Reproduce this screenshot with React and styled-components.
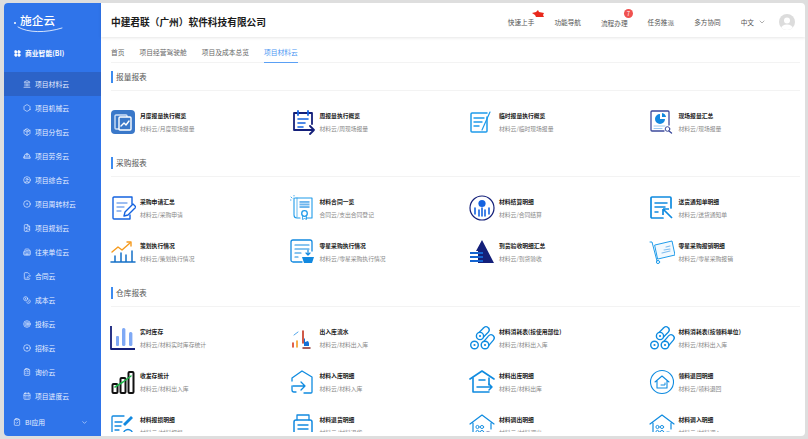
import React from 'react';
import styled, { createGlobalStyle } from 'styled-components';
import {
  LayoutGrid, Landmark, Hexagon, Package, HardHat, CircleUser, CircleDot, FileImage,
  Building2, FileSignature, Coins, Target, Disc, ClipboardList, CalendarDays, ClipboardCheck,
  ChevronDown,
} from 'lucide-react';

const GlobalStyle = createGlobalStyle`
  html, body { margin: 0; padding: 0; background: #dedede; }
  * { box-sizing: border-box; }
  body { font-family: "Noto Sans CJK SC", "Noto Sans", sans-serif; }
`;

const Page = styled.div`
  width: 808px;
  height: 439px;
  padding: 3px 3px 3px 4px;
  background: #dedede;
  overflow: hidden;
`;

const Window = styled.div`
  display: flex;
  height: 100%;
  background: #fff;
  border-radius: 4px;
  overflow: hidden;
`;

const Sidebar = styled.aside`
  width: 97px;
  flex: none;
  display: flex;
  flex-direction: column;
  background: #2f74ea;
  color: #e6efff;
`;

const Logo = styled.div`
  position: relative;
  height: 34px;
  padding: 9px 0 0 16px;
  color: #fff;
  font-size: 11.7px;
  line-height: 16px;
  font-weight: 500;
  svg { position: absolute; left: 13px; top: 23px; }
`;

const LogoDot = styled.span`
  position: absolute;
  left: 10px;
  top: 19px;
  width: 2px;
  height: 2px;
  border-radius: 50%;
  background: #fff;
`;

const BrandRow = styled.div`
  height: 32px;
  margin-bottom: 3px;
  padding-left: 10px;
  display: flex;
  align-items: center;
  gap: 4px;
  font-size: 6.8px;
  font-weight: 700;
  color: #fff;
`;

const NavItem = styled.div`
  height: 24px;
  padding-left: 19px;
  display: flex;
  align-items: center;
  gap: 4px;
  font-size: 6.8px;
  background: ${(p) => (p.$active ? '#2c63c8' : 'transparent')};
`;

const BiRow = styled.div`
  flex: 1;
  padding: 0 13px 0 9px;
  display: flex;
  align-items: center;
  gap: 4px;
  font-size: 6.8px;
  span { flex: 1; }
`;

const Main = styled.main`
  flex: 1;
  min-width: 0;
  padding-bottom: 4px;
  display: flex;
  flex-direction: column;
`;

const TopBar = styled.header`
  height: 34px;
  flex: none;
  padding: 3px 10px 0;
  display: flex;
  align-items: center;
  box-shadow: 0 1px 3px rgba(0, 0, 0, 0.1);
`;

const Company = styled.h1`
  flex: 1;
  margin: 0;
  font-size: 9.7px;
  font-weight: 700;
  color: #1b1b1b;
`;

const TopLink = styled.div`
  position: relative;
  margin: ${(p) => (p.$low ? '2px' : '0')} 0 0 20px;
  font-size: 6.65px;
  color: #555;
  white-space: nowrap;
`;

const NewMark = styled.svg`
  position: absolute;
  left: 24px;
  top: -7px;
`;

const Badge = styled.span`
  position: absolute;
  left: 23px;
  top: -9px;
  width: 9px;
  height: 9px;
  border-radius: 50%;
  background: #f0514f;
  color: #fff;
  font-size: 6px;
  line-height: 9px;
  text-align: center;
`;

const Lang = styled.div`
  margin-left: 20px;
  display: flex;
  align-items: center;
  gap: 4px;
  font-size: 6.65px;
  color: #555;
`;

const Avatar = styled.div`
  width: 16px;
  height: 16px;
  margin-left: 13px;
  border-radius: 50%;
  overflow: hidden;
  flex: none;
  svg { display: block; }
`;

const Tabs = styled.nav`
  height: 26px;
  flex: none;
  margin: 0 5px 0 10px;
  display: flex;
  gap: 15px;
  border-bottom: 1px solid #f3f3f3;
`;

const Tab = styled.div`
  height: 26px;
  padding-bottom: 5px;
  display: flex;
  align-items: flex-end;
  font-size: 6.75px;
  line-height: 10px;
  color: ${(p) => (p.$active ? '#4a96f2' : '#666')};
  border-bottom: 1px solid ${(p) => (p.$active ? '#5aa0f5' : 'transparent')};
`;

const Content = styled.div`
  flex: 1;
  min-height: 0;
  overflow: hidden;
  padding: 0 5px 0 10px;
`;

const SectionHead = styled.div`
  height: 28px;
  display: flex;
  align-items: center;
  border-bottom: 1px solid #f3f3f3;
  font-size: 7.7px;
  color: #555;
  &::before {
    content: '';
    width: 2px;
    height: 12px;
    margin-right: 3px;
    background: #3c8bf0;
  }
`;

const Section = styled.section`
  margin-bottom: 5px;
`;

const Grid = styled.div`
  padding-top: 9px;
  display: grid;
  grid-template-columns: repeat(4, 179.5px);
  grid-auto-rows: 44px;
`;

const Card = styled.div`
  display: flex;
  align-items: center;
`;

const IconBox = styled.div`
  width: 29px;
  flex: none;
  svg { display: block; margin-left: -1px; }
`;

const CardText = styled.div`
  display: flex;
  flex-direction: column;
  gap: 5px;
  white-space: nowrap;
`;

const CardTitle = styled.div`
  font-size: 5.8px;
  line-height: 8px;
  font-weight: 700;
  color: #222;
`;

const CardSub = styled.div`
  font-size: 5.8px;
  line-height: 8px;
  color: #888;
`;

const B = '#1f9bea';
const N = '#14207a';
const M = '#1463e0';
const C = '#0f8be0';

const Svg = ({ children }) => (
  <svg width="26" height="26" viewBox="0 0 26 26" fill="none" strokeWidth="1.4" strokeLinecap="round" strokeLinejoin="round">
    {children}
  </svg>
);

const icons = {
  monthly: (
    <Svg>
      <rect x="1" y="1" width="24" height="24" rx="4" fill="#3a78c9" />
      <rect x="5" y="6" width="12" height="14" rx="1" stroke="#cfe0f7" />
      <rect x="9" y="8" width="12" height="13" rx="1" stroke="#fff" fill="#3a78c9" />
      <path d="M11 17l3-3 2 2 3-4" stroke="#fff" />
    </Svg>
  ),
  weekly: (
    <Svg>
      <path d="M19 21H4V4h18v11" stroke={N} strokeWidth="1.8" />
      <path d="M8 2v4M18 2v4" stroke={M} strokeWidth="1.8" />
      <path d="M8 10h10M8 14h7M8 18h5" stroke={M} strokeWidth="1.6" />
      <path d="M14 21h10M20 17l4 4-4 4" stroke={N} strokeWidth="1.8" />
    </Svg>
  ),
  temp: (
    <Svg>
      <path d="M18 8V22a1 1 0 0 1-1 1H3a1 1 0 0 1-1-1V5a1 1 0 0 1 1-1h15" stroke={B} strokeWidth="1.5" />
      <path d="M5 9h10M5 13h8M5 17h5" stroke={B} />
      <path d="M21 3L13 21" stroke={B} strokeWidth="1.2" />
    </Svg>
  ),
  site: (
    <Svg>
      <path d="M20 16V3a1 1 0 0 0-1-1H3a1 1 0 0 0-1 1v18a1 1 0 0 0 1 1h12" stroke="#3c4a9c" strokeWidth="1.3" />
      <path d="M11 5a5 5 0 1 0 5 5h-5z" fill="#1289e0" />
      <path d="M13 4a5 5 0 0 1 4 4h-4z" fill="#1289e0" />
      <path d="M5 17h11M5 19.5h8" stroke="#9cc9ef" strokeWidth="1" />
      <circle cx="18.5" cy="20" r="2.3" stroke="#3c4a9c" strokeWidth="1" />
      <path d="M20 22l2.5 2" stroke="#3c4a9c" />
    </Svg>
  ),
  apply: (
    <Svg>
      <path d="M22 9V2H4a1 1 0 0 0-1 1v20a1 1 0 0 0 1 1h16v-4" stroke={M} strokeWidth="1.4" />
      <path d="M7 8h10M7 12h7M7 16h4" stroke="#7da9ee" strokeWidth="1.3" />
      <path d="M14 21l1-4 8-8 3 3-8 8z" stroke={M} strokeWidth="1.4" />
    </Svg>
  ),
  contract: (
    <Svg>
      <path d="M5 3h17v20h-6M10 23H7a3 3 0 0 1-3-3V3" stroke={B} strokeWidth="1.1" />
      <path d="M7 3v19" stroke={B} strokeWidth="0.7" />
      <rect x="9.5" y="6" width="10" height="7" fill="#6eb6ee" />
      <path d="M9.5 8.3h10M9.5 10.6h10" stroke="#fff" strokeWidth="0.6" />
      <circle cx="14.5" cy="18.5" r="2.8" stroke={B} strokeWidth="1.3" />
      <path d="M12.5 21.5v3l2-1 2 1v-3" stroke={B} strokeWidth="0.8" />
      <path d="M1 2l1 1M4 0v1M0 5h1" stroke={B} strokeWidth="0.8" />
    </Svg>
  ),
  settle: (
    <Svg>
      <circle cx="13" cy="13" r="12" stroke={N} strokeWidth="1.2" />
      <circle cx="13" cy="8.5" r="3.6" fill={M} />
      <path d="M6 13v6M10 15v6M13 13v8M16 15v6M20 13v6" stroke={M} strokeWidth="1.6" />
    </Svg>
  ),
  notice: (
    <Svg>
      <path d="M14 23H3a1 1 0 0 1-1-1V3a1 1 0 0 1 1-1h18a1 1 0 0 1 1 1v10" stroke={C} strokeWidth="1.7" />
      <path d="M6 8h12M6 12h10M6 17h3" stroke={C} strokeWidth="1.5" />
      <path d="M14 14h6M14 14v6M14 14l9 9" stroke={C} strokeWidth="1.7" strokeLinecap="butt" />
    </Svg>
  ),
  plan: (
    <Svg>
      <path d="M2 13l6-5 4 3 8-7" stroke="#f59a1e" strokeWidth="1.4" />
      <path d="M17 3h4v4" stroke="#f59a1e" strokeWidth="1.4" />
      <path d="M1 23h24M5 23v-6M11 23v-9M16 23v-7M22 23v-11" stroke="#1570c8" strokeWidth="1.5" />
    </Svg>
  ),
  retail: (
    <Svg>
      <path d="M12 23H3a2 2 0 0 1-2-2V3a2 2 0 0 1 2-2h17a2 2 0 0 1 2 2v9" stroke="#1289e0" strokeWidth="1.3" />
      <path d="M5 6h14M5 10h14M5 14h6M5 18h3" stroke="#1289e0" strokeWidth="1.2" />
      <path d="M12 18h12l-2 6h-8z" fill="#1289e0" />
      <path d="M18 11v5M16 14l2 2 2-2" stroke="#1289e0" strokeWidth="1.2" />
    </Svg>
  ),
  arrival: (
    <Svg>
      <path d="M13 1l12 23H9V12H7z" fill={N} />
      <path d="M1 14h13M1 18h13M1 22h13" stroke="#1463d0" strokeWidth="2" strokeLinecap="butt" />
    </Svg>
  ),
  cart: (
    <Svg>
      <path d="M1 3h2l5 19" stroke={B} strokeWidth="1" />
      <path d="M6 6l17-4 3 14-17 4z" stroke={B} strokeWidth="1" fill="#f2f9fe" />
      <path d="M13 14l8-2M15 11l6-1M17 8l4-1" stroke="#7fbdef" strokeWidth="1.1" />
      <circle cx="9" cy="23" r="1.6" stroke={B} strokeWidth="1" />
    </Svg>
  ),
  stock: (
    <Svg>
      <path d="M1 1v23h24" stroke={N} strokeWidth="1.8" strokeLinecap="butt" />
      <rect x="6" y="11" width="3" height="10" rx="1" fill="#7fa9f5" />
      <rect x="12" y="3" width="3.4" height="18" rx="1.5" fill="#7fa9f5" />
      <rect x="19" y="7" width="3.4" height="14" rx="1.5" fill="#7fa9f5" />
    </Svg>
  ),
  flow: (
    <Svg>
      <path d="M7 22v-6" stroke="#f59a1e" strokeWidth="1.6" />
      <path d="M3 22v-4" stroke="#d8391c" strokeWidth="1.6" />
      <path d="M13 18V6" stroke="#c4301c" strokeWidth="1.6" />
      <path d="M4 10l4-3" stroke="#3d9be8" strokeWidth="0.9" />
      <path d="M14 21v-8l1 1v3l3-1 1 2v3z" fill="#1470d8" />
      <path d="M13 23h7" stroke="#8a2a2a" strokeWidth="1.5" />
    </Svg>
  ),
  rolls: (
    <Svg>
      <path d="M11 11l6-6" stroke={C} strokeWidth="7.6" />
      <path d="M11 11l6-6" stroke="#fff" strokeWidth="5" />
      <path d="M16 20l6-7" stroke={C} strokeWidth="7.6" />
      <path d="M16 20l6-7" stroke="#fff" strokeWidth="5" />
      <circle cx="11" cy="11" r="3.6" stroke={C} strokeWidth="1.4" fill="#fff" />
      <circle cx="5.5" cy="20" r="3.8" stroke={C} strokeWidth="1.4" fill="#fff" />
      <circle cx="16" cy="20" r="3.8" stroke={C} strokeWidth="1.4" fill="#fff" />
      <circle cx="11" cy="11" r="1.1" fill={C} />
      <circle cx="5.5" cy="20" r="1.1" fill={C} />
      <circle cx="16" cy="20" r="1.1" fill={C} />
    </Svg>
  ),
  inout: (
    <Svg>
      <rect x="2.5" y="15" width="5" height="9" rx="1" stroke="#111" strokeWidth="2" />
      <rect x="10.5" y="9" width="5" height="15" rx="1" stroke="#111" strokeWidth="2" />
      <rect x="18.5" y="3" width="5" height="21" rx="1" stroke="#111" strokeWidth="2" />
      <path d="M5 18l8-5 8-6" stroke="#1fb84a" strokeWidth="1.5" />
    </Svg>
  ),
  houseIn: (
    <Svg>
      <path d="M2 12V9l10-7 10 6v15a1 1 0 0 1-1 1h-7M2 17v4a2 2 0 0 0 2 2h2" stroke={C} strokeWidth="1.3" />
      <path d="M3 17h12M11 13l4 4-4 4" stroke={C} strokeWidth="1.3" />
    </Svg>
  ),
  houseOut: (
    <Svg>
      <path d="M1 10l12-8 12 8" stroke={C} strokeWidth="1.6" />
      <path d="M4 9v14h16M20 16V9" stroke={C} strokeWidth="1.6" />
      <path d="M10 11h6M8 18h15M20 15l3 3-3 3" stroke={C} strokeWidth="1.5" />
    </Svg>
  ),
  houseBack: (
    <Svg>
      <circle cx="13" cy="13" r="11.5" stroke={C} strokeWidth="1.1" />
      <path d="M6 13l7-6 7 6M8 12v7h10v-7" stroke={C} strokeWidth="1.1" />
      <path d="M12 16h4v-2" stroke={C} strokeWidth="1" />
    </Svg>
  ),
  bidDoc: (
    <Svg>
      <path d="M14 3H3a1 1 0 0 0-1 1v19h11" stroke="#1289e0" strokeWidth="1.3" />
      <path d="M5 9h7M5 13h6M5 17h4" stroke="#1289e0" strokeWidth="1.3" />
      <path d="M13 11l8-8 2 2-8 8z" fill="#1289e0" />
      <circle cx="18" cy="21" r="4.5" stroke="#1289e0" />
    </Svg>
  ),
  returnDoc: (
    <Svg>
      <path d="M7 7V2h12v5" stroke="#1289e0" strokeWidth="1.3" />
      <path d="M4 24V9a2 2 0 0 1 2-2h14a2 2 0 0 1 2 2v15" stroke="#1289e0" strokeWidth="1.5" />
      <path d="M8 12h10M8 16h10M8 20h10" stroke="#1289e0" strokeWidth="1.4" />
    </Svg>
  ),
  storeOut: (
    <Svg>
      <path d="M1 11l12-9 12 9M4 10v15M22 10v6" stroke={C} strokeWidth="1.2" />
      <circle cx="8.5" cy="14" r="1.6" stroke={C} strokeWidth="0.9" />
      <circle cx="13" cy="14" r="1.6" stroke={C} strokeWidth="0.9" />
      <circle cx="8.5" cy="19" r="1.6" stroke={C} strokeWidth="0.9" />
      <circle cx="13" cy="19" r="1.6" stroke={C} strokeWidth="0.9" />
      <circle cx="19" cy="24" r="5" stroke={N} strokeWidth="1.2" />
    </Svg>
  ),
  storeIn: (
    <Svg>
      <path d="M1 11l12-9 12 9M4 10v15M22 10v6" stroke={C} strokeWidth="1.2" />
      <circle cx="8.5" cy="14" r="1.6" stroke={C} strokeWidth="0.9" />
      <circle cx="13" cy="14" r="1.6" stroke={C} strokeWidth="0.9" />
      <circle cx="8.5" cy="19" r="1.6" stroke={C} strokeWidth="0.9" />
      <circle cx="13" cy="19" r="1.6" stroke={C} strokeWidth="0.9" />
      <circle cx="19" cy="24" r="5" stroke={C} strokeWidth="1.2" />
    </Svg>
  ),
};

const navItems = [
  { label: '项目材料云', icon: Landmark, active: true },
  { label: '项目机械云', icon: Hexagon },
  { label: '项目分包云', icon: Package },
  { label: '项目劳务云', icon: HardHat },
  { label: '项目综合云', icon: CircleUser },
  { label: '项目周转材云', icon: CircleDot },
  { label: '项目规划云', icon: FileImage },
  { label: '往来单位云', icon: Building2 },
  { label: '合同云', icon: FileSignature },
  { label: '成本云', icon: Coins },
  { label: '投标云', icon: Target },
  { label: '招标云', icon: Disc },
  { label: '询价云', icon: ClipboardList },
  { label: '项目进度云', icon: CalendarDays },
];

const sections = [
  {
    title: '报量报表',
    cards: [
      ['monthly', '月度报量执行概览', '材料云/月度现场报量'],
      ['weekly', '周报量执行概览', '材料云/周现场报量'],
      ['temp', '临时报量执行概览', '材料云/临时现场报量'],
      ['site', '现场报量汇总', '材料云/现场报量'],
    ],
  },
  {
    title: '采购报表',
    cards: [
      ['apply', '采购申请汇总', '材料云/采购申请'],
      ['contract', '材料合同一览', '合同云/支出合同登记'],
      ['settle', '材料结算明细', '材料云/合同结算'],
      ['notice', '送货通知单明细', '材料云/送货通知单'],
      ['plan', '策划执行情况', '材料云/策划执行情况'],
      ['retail', '零星采购执行情况', '材料云/零星采购执行情况'],
      ['arrival', '到货验收明细汇总', '材料云/到货验收'],
      ['cart', '零星采购报销明细', '材料云/零星采购报销'],
    ],
  },
  {
    title: '仓库报表',
    cards: [
      ['stock', '实时库存', '材料云/材料实时库存统计'],
      ['flow', '出入库流水', '材料云/材料出入库'],
      ['rolls', '材料消耗表(按使用部位)', '材料云/材料出入库'],
      ['rolls', '材料消耗表(按领料单位)', '材料云/材料出入库'],
      ['inout', '收发存统计', '材料云/材料出入库'],
      ['houseIn', '材料入库明细', '材料云/材料入库'],
      ['houseOut', '材料出库明细', '材料云/材料出库'],
      ['houseBack', '领料退回明细', '材料云/领料退回'],
      ['bidDoc', '材料报损明细', '材料云/材料报损'],
      ['returnDoc', '材料退货明细', '材料云/材料退货'],
      ['storeOut', '材料调出明细', '材料云/材料调出'],
      ['storeIn', '材料调入明细', '材料云/材料调入'],
    ],
  },
];

const App = () => (
  <Page>
    <GlobalStyle />
    <Window>
      <Sidebar>
        <Logo>
          <LogoDot />
          施企云
          <svg width="46" height="7" viewBox="0 0 46 7" fill="none" stroke="#fff">
            <path d="M1 1c10 6 28 6 44 1" strokeWidth="0.8" strokeLinecap="round" />
          </svg>
        </Logo>
        <BrandRow>
          <LayoutGrid size={7} strokeWidth={3} fill="currentColor" />
          商业智能(BI)
        </BrandRow>
        {navItems.map((item) => (
          <NavItem key={item.label} $active={item.active}>
            <item.icon size={8} strokeWidth={2} />
            {item.label}
          </NavItem>
        ))}
        <BiRow>
          <ClipboardCheck size={8} strokeWidth={2} />
          <span>BI应用</span>
          <ChevronDown size={7} />
        </BiRow>
      </Sidebar>
      <Main>
        <TopBar>
          <Company>中建君联（广州）软件科技有限公司</Company>
          <TopLink>
            快速上手
            <NewMark width="12" height="7" viewBox="0 0 12 7">
              <path d="M0 3l4-1 2-2 1 2 5 1-1 2 1 2H4L3 5z" fill="#e8281c" />
            </NewMark>
          </TopLink>
          <TopLink>功能导航</TopLink>
          <TopLink $low>
            流程办理
            <Badge>7</Badge>
          </TopLink>
          <TopLink>任务推派</TopLink>
          <TopLink>多方协同</TopLink>
          <Lang>
            中文
            <ChevronDown size={8} color="#888" />
          </Lang>
          <Avatar>
            <svg width="16" height="16" viewBox="0 0 16 16">
              <rect width="16" height="16" fill="#dcdcdc" />
              <circle cx="8" cy="6.5" r="3" fill="#fff" />
              <ellipse cx="8" cy="14.5" rx="6" ry="4" fill="#fff" />
            </svg>
          </Avatar>
        </TopBar>
        <Tabs>
          <Tab>首页</Tab>
          <Tab>项目经营驾驶舱</Tab>
          <Tab>项目及成本总览</Tab>
          <Tab $active>项目材料云</Tab>
        </Tabs>
        <Content>
          {sections.map((section) => (
            <Section key={section.title}>
              <SectionHead>{section.title}</SectionHead>
              <Grid>
                {section.cards.map(([icon, title, sub]) => (
                  <Card key={title}>
                    <IconBox>{icons[icon]}</IconBox>
                    <CardText>
                      <CardTitle>{title}</CardTitle>
                      <CardSub>{sub}</CardSub>
                    </CardText>
                  </Card>
                ))}
              </Grid>
            </Section>
          ))}
        </Content>
      </Main>
    </Window>
  </Page>
);

export default App;
